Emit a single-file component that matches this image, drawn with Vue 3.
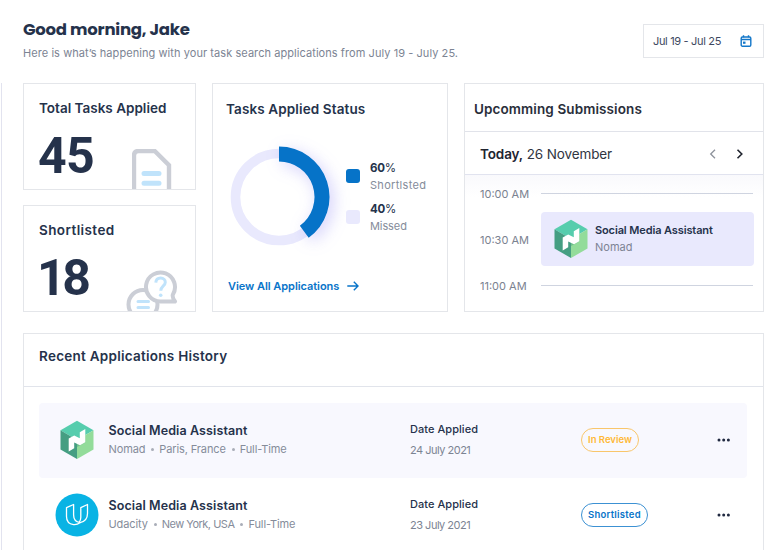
<script setup>
import { h } from 'vue'

const legend = [
  { value: '60', label: 'Shortlsted', tone: 'blue' },
  { value: '40', label: 'Missed', tone: 'pale' },
]

const applications = [
  { logo: 'nomad', title: 'Social Media Assistant', meta: ['Nomad', 'Paris, France', 'Full-Time'], date: '24 July 2021', status: 'In Review', tone: 'review' },
  { logo: 'udacity', title: 'Social Media Assistant', meta: ['Udacity', 'New York, USA', 'Full-Time'], date: '23 July 2021', status: 'Shortlisted', tone: 'short' },
]

const NomadLogo = () =>
  h('svg', { viewBox: '0 0 34 40', width: 34, height: 40 }, [
    h('path', { d: 'M17 .8 33.500 10.300 17 20 .5 10.300Z', fill: '#56cdad' }),
    h('path', { d: 'M.5 10.300 17 20V39L.5 29.500Z', fill: '#459e82' }),
    h('path', { d: 'M33.500 10.300 17 20V39l16.500-9.500Z', fill: '#93dc9a' }),
    h('path', { d: 'M17 20 25.300 15v7.500L17 27Z', fill: '#6fc08c' }),
    h('path', { d: 'M8.700 18.500 14.200 15.500 19.800 18.300V12.200L25.300 9V22.200L20 25.200 14.200 22.400V28.300L8.700 31.500Z', fill: '#fff' }),
  ])
</script>

<template>
  <div class="page">
    <div class="rail"></div>
    <main class="main">
      <header class="header">
        <div>
          <h1 class="t hello">Good morning, Jake</h1>
          <p class="t sub">Here is what’s happening with your task search applications from July 19 - July 25.</p>
        </div>
        <button class="range">
          <span class="t range-text">Jul 19 - Jul 25</span>
          <svg width="12" height="12" viewBox="0 0 12 12" fill="none" stroke="#1377c9">
            <rect x="1.200" y="2" width="9.600" height="9.200" rx="1.200" stroke-width="1.400" />
            <path d="M1 4.500h10" stroke-width="1.500" />
            <path d="M3.500.3v2M8.500.3v2" stroke-width="1.400" />
            <rect x="3" y="6.600" width="2.500" height="2.200" fill="#1377c9" stroke="none" />
          </svg>
        </button>
      </header>

      <section class="cards">
        <div class="stats">
          <article class="card stat">
            <h2 class="t heading total">Total Tasks Applied</h2>
            <div class="stat-row">
              <span class="t number">45</span>
              <svg class="doc" width="40" height="40" viewBox="0 0 40 40" fill="none">
                <path d="M2 42V6.500Q2 2 6.500 2H22.700L37 16.200V42" stroke="#cbced6" stroke-width="4.400" />
                <path d="M12 24.400H27M12 34.300H27" stroke="#c0e3fb" stroke-width="5" stroke-linecap="round" />
              </svg>
            </div>
          </article>
          <article class="card stat">
            <h2 class="t heading short-title">Shortlisted</h2>
            <div class="stat-row">
              <span class="t number tight">18</span>
              <svg class="chat" width="53" height="42" viewBox="0 0 53 42" fill="none">
                <circle cx="17" cy="34.500" r="14.500" stroke="#cbced6" stroke-width="4" fill="#fff" />
                <path d="M12 31.500H22.500M12 37.500H22.500" stroke="#c0e3fb" stroke-width="3" stroke-linecap="round" />
                <path d="M49 31.500H34.500A14.500 14.500 0 1 1 46.900 24.500Q45.900 27 49 31.500Z" stroke="#cbced6" stroke-width="4" stroke-linejoin="round" fill="#fff" />
                <path d="M29.800 12.600C30 9.200 32.500 8 34.700 8C37.500 8 39.300 9.900 39.300 12.200C39.300 16 34.800 15.900 34.800 20.800" stroke="#c0e3fb" stroke-width="3" />
                <circle cx="34.700" cy="25.300" r="1.800" fill="#c0e3fb" />
              </svg>
            </div>
          </article>
        </div>

        <article class="card status">
          <h2 class="t heading status-title">Tasks Applied Status</h2>
          <div class="chart-row">
            <svg class="donut" width="128" height="128" viewBox="0 0 128 128" fill="none">
              <circle cx="64" cy="64" r="43.500" stroke="#e9e9fd" stroke-width="9.600" />
              <path d="M64 21A43 43 0 0 1 89.270 98.790" stroke="#0673c8" stroke-width="15" class="arc" />
            </svg>
            <ul class="legend">
              <li v-for="item in legend" :key="item.label">
                <i :class="['swatch', item.tone]"></i>
                <div>
                  <div class="t pct"><b>{{ item.value }}</b>%</div>
                  <div :class="['t', 'pct-label', item.tone]">{{ item.label }}</div>
                </div>
              </li>
            </ul>
          </div>
          <a class="link">
            <span class="t link-text">View All Applications</span>
            <svg width="12" height="10" viewBox="0 0 12 10" fill="none" stroke="#0874c9" stroke-width="1.400">
              <path d="M.3 5H11M6.800.8 11 5 6.800 9.200" />
            </svg>
          </a>
        </article>

        <article class="card upcoming">
          <h2 class="t heading up-title">Upcomming Submissions</h2>
          <div class="day">
            <span class="t day-text"><b>Today,</b> 26 November</span>
            <svg width="36" height="10" viewBox="0 0 36 10" fill="none" stroke-width="1.300">
              <path d="M6 .7 1.700 5 6 9.300" stroke="#8d929b" />
              <path d="M28.500.7 32.800 5 28.500 9.300" stroke="#20242e" stroke-width="1.600" />
            </svg>
          </div>
          <div class="schedule">
            <div class="slot"><span class="t time">10:00 AM</span><i class="rule"></i></div>
            <div class="slot busy">
              <span class="t time">10:30 AM</span>
              <div class="event">
                <NomadLogo />
                <div>
                  <div class="t event-title">Social Media Assistant</div>
                  <div class="t event-org">Nomad</div>
                </div>
              </div>
            </div>
            <div class="slot"><span class="t time">11:00 AM</span><i class="rule"></i></div>
          </div>
        </article>
      </section>

      <section class="history">
        <h2 class="t heading history-title">Recent Applications History</h2>
        <div class="rows">
          <div v-for="app in applications" :key="app.logo" :class="['row', app.logo]">
            <div class="logo">
              <NomadLogo v-if="app.logo === 'nomad'" />
              <svg v-else width="44" height="44" viewBox="0 0 44 44" fill="none">
                <circle cx="22" cy="22" r="21.500" fill="#09b3e4" />
                <g stroke="#fff" stroke-width="1.300" stroke-linejoin="round">
                  <path d="M11.500 14.600 18.600 11.500V22Q18.600 28.500 25 29.700Q22 32 18.500 31.600Q11.500 30.600 11.500 23.500Z" />
                  <path d="M25 29.700Q32.500 28 32.500 20.500V11.500L25.800 14.600V24.500Q25.800 27.500 24 29.400" />
                </g>
              </svg>
            </div>
            <div class="job">
              <div class="t job-title">{{ app.title }}</div>
              <div class="t meta">
                <template v-for="(part, i) in app.meta" :key="part">
                  <i v-if="i" class="dot"></i><span>{{ part }}</span>
                </template>
              </div>
            </div>
            <div class="applied">
              <div class="t date-label">Date Applied</div>
              <div class="t date">{{ app.date }}</div>
            </div>
            <div class="state"><span :class="['t', 'pill', app.tone]">{{ app.status }}</span></div>
            <svg class="more" width="14" height="4" viewBox="0 0 14 4" fill="#202940">
              <circle cx="2" cy="2" r="1.500" /><circle cx="6.700" cy="2" r="1.500" /><circle cx="11.400" cy="2" r="1.500" />
            </svg>
          </div>
        </div>
      </section>
    </main>
  </div>
</template>

<style>
body { background: #fff; overflow: hidden; }
</style>

<style scoped>
* { box-sizing: border-box; margin: 0; padding: 0; }
.page { display: flex; width: 770px; height: 550px; overflow: hidden; font-family: Inter, "Liberation Sans", sans-serif; color: #25324b; }
.t { white-space: nowrap; }
svg { flex: none; display: block; }
.rail { flex: none; width: 2px; margin-top: 83px; border-right: 1px solid #e2e3ef; }
.main { width: 768px; padding: 0 6px 0 21px; }
.header { display: flex; justify-content: space-between; height: 83px; padding-top: 20px; }
.hello { font: 700 16.500px/20px Poppins, Inter, sans-serif; letter-spacing: -.24px; }
.sub { font-size: 11px; line-height: 16px; margin-top: 5px; letter-spacing: .065px; color: #7c8493; }
.range { display: flex; align-items: center; justify-content: space-between; width: 121px; height: 34px; margin-top: 4px; padding: 0 11px 0 9px; background: #fff; border: 1px solid #e4e6ea; font-family: inherit; }
.range-text { font-size: 11px; letter-spacing: -.33px; color: #3d4860; }
.cards { display: flex; gap: 16px; height: 229px; }
.card { border: 1px solid #e4e6ea; background: #fff; }
.stats { width: 173px; display: flex; flex-direction: column; gap: 15px; }
.stat { height: 107px; overflow: hidden; padding: 14px 0 0 15px; }
.heading { font-weight: 600; font-size: 13.500px; line-height: 20px; }
.short-title { letter-spacing: .4px; }
.stat-row { display: flex; height: 72px; }
.number { width: 93px; font: 700 50px/76px Roboto, sans-serif; letter-spacing: -.6px; text-indent: -1px; }
.tight { letter-spacing: -3.500px; text-indent: -2px; }
.doc { margin-top: 31px; }
.chat { margin: 30px 0 0 -6px; }
.status { width: 236px; padding: 15px 0 0 13px; }
.status-title { letter-spacing: .12px; }
.chart-row { display: flex; height: 158px; padding: 14px 0 0 2px; }
.donut { margin-left: -13px; overflow: visible; }
.arc { filter: drop-shadow(4px 4px 8px rgba(100, 90, 240, .28)); }
.legend { list-style: none; padding-top: 27px; margin-left: 3px; }
.legend li { display: flex; gap: 10px; height: 41px; }
.swatch { width: 14px; height: 14px; border-radius: 3px; margin-top: 9px; }
.swatch.blue { background: #0673c8; }
.swatch.pale { background: #e9e9fd; }
.pct { font-size: 11.500px; line-height: 16px; letter-spacing: -.6px; }
.pct b { font-weight: 700; letter-spacing: -.3px; }
.pct-label { font-size: 11px; line-height: 18px; letter-spacing: .3px; color: #858c9a; }
.pct-label.pale { letter-spacing: -.1px; }
.link { display: flex; align-items: center; gap: 8px; padding-left: 2px; height: 18px; }
.link-text { font-size: 11px; font-weight: 600; letter-spacing: -.05px; color: #0874c9; }
.upcoming { width: 300px; }
.up-title { height: 48px; line-height: 51px; padding-left: 9px; letter-spacing: .1px; border-bottom: 1px solid #e1e3ea; color: #292e3a; }
.day { height: 43px; display: flex; align-items: center; justify-content: space-between; padding: 1px 18px 0 15px; border-bottom: 1px solid #e1e3ef; color: #303541; }
.day-text { font-size: 13.500px; letter-spacing: -.12px; }
.day-text b { font-weight: 600; color: #202430; }
.schedule { height: 135px; background: linear-gradient(#f9f9fc, #fff 22px); padding: 10px 9px 0 15px; }
.slot { display: flex; align-items: center; height: 18px; }
.slot.busy { height: 74px; }
.time { width: 61px; font-size: 11px; color: #7b8290; }
.rule { flex: 1; height: 1px; background: #cfd4e0; margin: -1px 1px 0 0; }
.event { display: flex; align-items: center; gap: 7px; width: 213px; height: 54px; margin-top: -3px; padding-left: 13px; border-radius: 4px; background: #e9e9fd; }
.event-title { font-size: 11px; line-height: 16px; margin-top: 1px; font-weight: 600; letter-spacing: -.12px; }
.event-org { font-size: 11px; line-height: 19px; color: #7d8394; }
.history { margin-top: 21px; height: 240px; border: 1px solid #e4e6ea; }
.history-title { height: 53px; padding-left: 15px; line-height: 45px; letter-spacing: .26px; border-bottom: 1px solid #e1e4eb; }
.rows { padding: 16px 16px 0 15px; }
.row { display: grid; grid-template-columns: 69.500px 301.500px 171px 1fr 14px; align-items: center; height: 75px; padding: 0 16px 1px 0; border-radius: 4px; }
.row.nomad { background: #f8f8fe; }
.logo { display: flex; justify-content: center; width: 44px; margin-left: 15.500px; }
.job-title { font-size: 12.500px; line-height: 18px; font-weight: 600; letter-spacing: .1px; }
.meta { display: flex; align-items: center; font-size: 11px; line-height: 18px; letter-spacing: -.12px; color: #858c9a; }
.udacity .meta span:nth-of-type(2) { letter-spacing: -.5px; }
.dot { width: 3px; height: 3px; border-radius: 50%; background: #a9adb8; margin: 1px 5px 0 6px; }
.date-label { font-size: 11px; line-height: 18px; font-weight: 500; letter-spacing: .05px; }
.date { font-size: 11px; line-height: 18px; margin-top: 3px; letter-spacing: -.5px; color: #7c8493; }
.applied { margin-top: -1px; }
.state { display: flex; }
.pill { height: 24px; line-height: 21px; padding: 0 6px; border: 1px solid; border-radius: 12px; font-size: 9.500px; font-weight: 600; }
.pill.review { color: #ffb836; border-color: #f9c66b; }
.pill.short { letter-spacing: .25px; color: #0874c9; border-color: #3c91d3; }
</style>
